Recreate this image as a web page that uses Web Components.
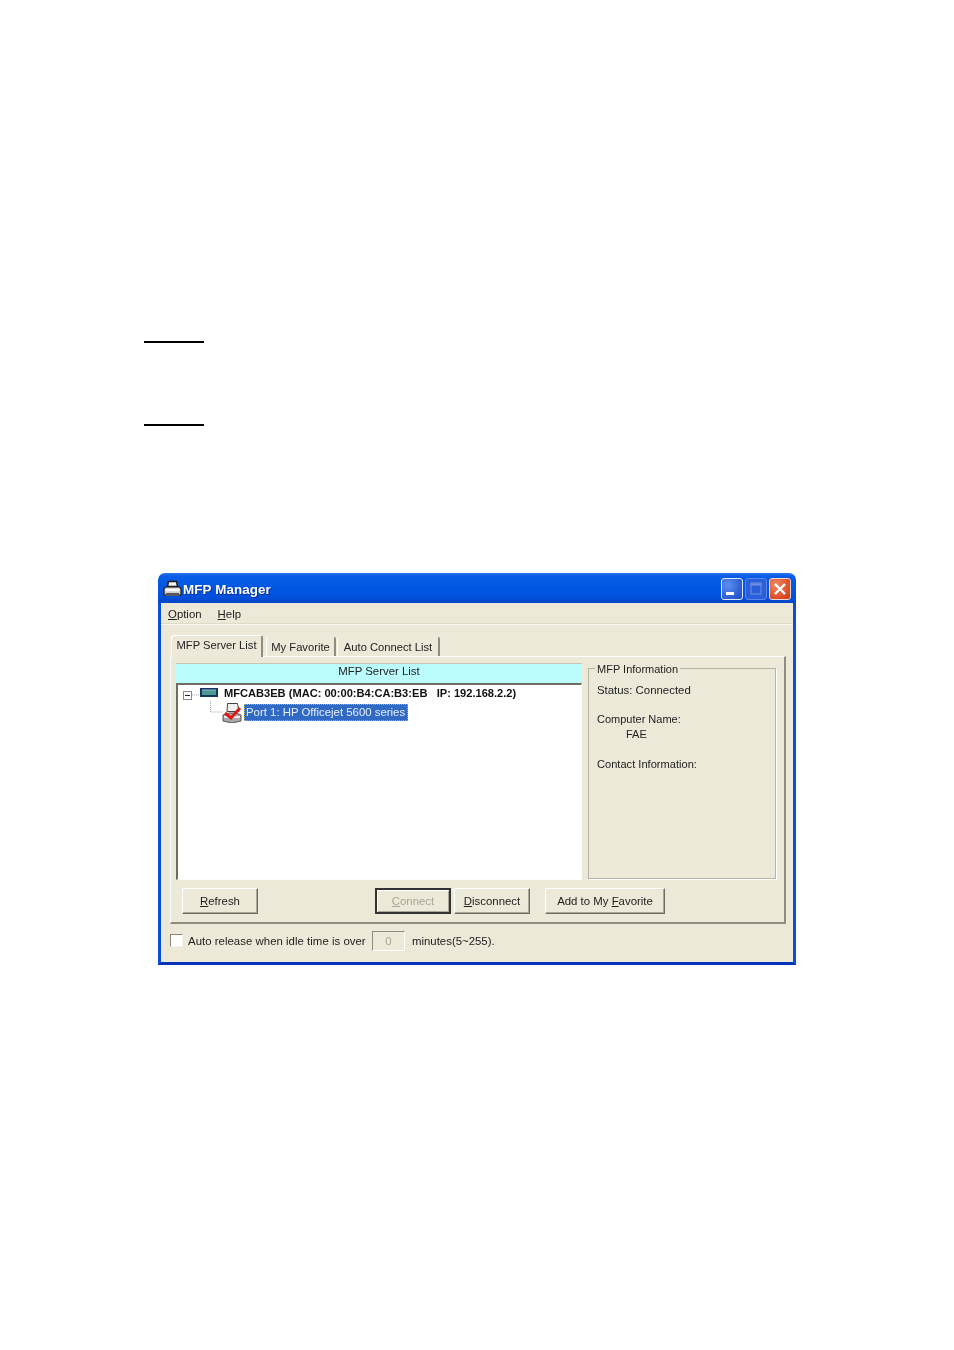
<!DOCTYPE html>
<html><head><meta charset="utf-8"><title>MFP Manager</title>
<style>html,body{margin:0;background:#fff}body{width:954px;height:1350px;overflow:hidden;font:11.4px "Liberation Sans",Arial,sans-serif;color:#222}</style>
</head><body>
<doc-page>
  <doc-rule style="margin-top:341px"></doc-rule>
  <doc-rule style="margin-top:81px"></doc-rule>
  <mfp-window style="margin-top:147px"></mfp-window>
</doc-page>
<script>
function el(name, html, css){
  customElements.define(name, class extends HTMLElement{
    constructor(){super();const r=this.attachShadow({mode:'open'});r.innerHTML='<style>'+css+'</style>'+html;}
  });
}
el('doc-page','<slot></slot>',':host{display:flow-root}');
el('doc-rule','',':host{display:block;width:60px;height:2px;margin-left:144px;background:#000}');
el('xp-caption',`
  <svg width="19" height="18" viewBox="0 0 19 18"><path d="M5.5 1.5h8l1 5h-10z" fill="#f2f2f2" stroke="#1c1c1c" stroke-width="1.4"/><path d="M2.5 7h14l1.5 2v5a1 1 0 0 1-1 1H2a1 1 0 0 1-1-1V9z" fill="#cfcfcf" stroke="#1c1c1c" stroke-width="1.2"/><path d="M2.5 8.8h14v2.4h-14z" fill="#fff"/><path d="M3 13h13v3H3z" fill="#5a5a5a"/></svg>
  <span class="t">MFP Manager</span>
  <span class="btns">
    <span class="b min"><svg width="22" height="22" viewBox="0 0 22 22"><rect x="5" y="14" width="8" height="3" fill="#fff"/></svg></span>
    <span class="b max"><svg width="22" height="22" viewBox="0 0 22 22"><rect x="6" y="5" width="10" height="11" fill="none" stroke="#6f92e0"/><path d="M6 6.5h10" stroke="#6f92e0" stroke-width="2"/></svg></span>
    <span class="b cls"><svg width="22" height="22" viewBox="0 0 22 22"><path d="M6 6l10 10M16 6L6 16" stroke="#fff" stroke-width="2.4"/></svg></span>
  </span>`,`
  :host{display:flex;align-items:center;height:30px;box-sizing:border-box;padding:2px 5px 0 5px;border-radius:7px 7px 0 0;background:linear-gradient(#2a78ee 0,#0a5de6 3px,#0358e2 12px,#0150dc 24px,#0245c8 30px)}
  svg{display:block;flex:none}
  .t{margin-left:1px;font:bold 13.4px "Liberation Sans",sans-serif;color:#fff;text-shadow:1px 1px 0 #0f2f92;letter-spacing:.1px;flex:1;padding-top:1px}
  .btns{display:flex;gap:2px}
  .b{width:22px;height:22px;box-sizing:border-box;border:1px solid #dfe8fb;border-radius:3px;display:flex;overflow:hidden}
  .b svg{margin:-1px}
  .min{background:radial-gradient(circle at 30% 30%,#5d8ff0,#2553cf 80%)}
  .max{background:#2a5fdc;border-color:#5c85e6}
  .cls{background:radial-gradient(circle at 30% 30%,#ee8a66,#d8431c 80%);border-color:#f0d8d0}`);
el('xp-menu','<span><u>O</u>ption</span><span><u>H</u>elp</span>',`
  :host{display:flex;gap:16px;height:21px;align-items:center;padding:0 0 0 7px;border-bottom:1px solid #f8f7f0;box-shadow:inset 0 -1px 0 #dedbc8}
  u{text-underline-offset:1px}`);
el('xp-tabs','<span class="a">MFP Server List</span><span class="i" style="width:70px">My Favorite</span><span class="i" style="width:103px">Auto Connect List</span>',`
  :host{display:flex;align-items:flex-end;height:21px;padding-left:10px;position:relative;z-index:1;white-space:nowrap;font-size:11.2px}
  span{display:flex;align-items:center;justify-content:center;box-sizing:border-box}
  .a{width:92px;height:22px;margin-bottom:-1px;background:#ece9d8;border:1px solid #fff;border-bottom:0;border-right:2px solid #8f8d80;border-radius:3px 3px 0 0;margin-right:3px;padding-bottom:3px}
  .i{height:19px;background:#ece9d8;border-left:1px solid #fff;border-right:2px solid #8f8d80;border-radius:2px 2px 0 0;margin-right:1px;padding-top:1px}`);
el('mfp-tree',`
  <div class="row r1">
    <svg width="35" height="16" viewBox="0 0 35 16"><rect x=".5" y="6.5" width="8" height="8" fill="#fff" stroke="#8a8a82"/><path d="M2 10.5h5" stroke="#222"/><path d="M9 10h8" stroke="#a8a8a0" stroke-dasharray="1 1"/><rect x="17" y="3" width="18" height="9" fill="#16365f"/><rect x="19" y="5" width="14" height="5" fill="#4f9a8f"/><path d="M19 5h14" stroke="#8fb8e8"/></svg>
    <b>MFCAB3EB (MAC: 00:00:B4:CA:B3:EB &nbsp;&nbsp;IP: 192.168.2.2)</b>
  </div>
  <div class="row r2">
    <svg width="60" height="22" viewBox="0 0 60 22"><path d="M27.5 0v11h12" fill="none" stroke="#a8a8a0" stroke-dasharray="1 1"/><path d="M44.5 2.5h10l1.5 8h-12z" fill="#f0f0f0" stroke="#444"/><path d="M40 14l6-2h7l5 2v6l-9 2-9-2z" fill="#a9a9a9" stroke="#555"/><path d="M41 15h16v2H41z" fill="#e6e6e6"/><path d="M42 12l6 5 9-10" fill="none" stroke="#e01818" stroke-width="3"/></svg>
    <span class="sel">Port 1: HP Officejet 5600 series</span>
  </div>`,`
  :host{display:block;box-sizing:border-box;height:197px;background:#fff;border:1px solid #fdfdf8;border-top:2px solid #6f6d62;border-left:2px solid #6f6d62;padding:0 0 0 5px}
  .row{display:flex;align-items:center}
  svg{display:block;flex:none}
  .r1{height:16px;gap:6px}
  b{font:bold 11.1px "Liberation Sans",Arial,sans-serif;white-space:pre;color:#111}
  .r2{height:22px}
  .sel{margin-left:1px;background:#316ac5;color:#e6eefc;width:164px;height:17px;box-sizing:border-box;padding-left:2px;line-height:16px;outline:1px dotted #c9b04a;outline-offset:-1px;white-space:nowrap}`);
el('mfp-info',`
  <span class="lg">MFP Information</span>
  <div style="margin-top:14px">Status: Connected</div>
  <div style="margin-top:15px;font-size:11px">Computer Name:</div>
  <div style="margin-top:1px;padding-left:29px;font-size:11px">FAE</div>
  <div style="margin-top:16px;font-size:11.1px">Contact Information:</div>`,`
  :host{display:block;position:relative;box-sizing:border-box;width:188px;height:211px;border:1px solid #b8b5a2;box-shadow:1px 1px 0 #fff;padding:0 0 0 8px;line-height:14px;white-space:nowrap}
  .lg{position:absolute;left:6px;top:-7px;background:#ece9d8;padding:0 2px;font-size:11px}`);
el('xp-button','<slot></slot>',`
  :host{display:flex;align-items:center;justify-content:center;box-sizing:border-box;height:26px;background:#ece9d8;border:1px solid;border-color:#fff #6f6d62 #6f6d62 #fff;box-shadow:inset -1px -1px 0 #aca899;white-space:nowrap;flex:none}
  :host([def]){border:2px solid #1a1a1a;border-color:#333;box-shadow:inset 1px 1px 0 #fff,inset -1px -1px 0 #aca899;color:#a8a696}`);
el('mfp-panel',`
  <div class="top">
    <div class="list"><div class="head">MFP Server List</div><mfp-tree></mfp-tree></div>
    <mfp-info></mfp-info>
  </div>
  <div class="bar">
    <xp-button style="width:76px"><u>R</u>efresh</xp-button>
    <xp-button def style="width:76px;margin-left:117px"><u>C</u>onnect</xp-button>
    <xp-button style="width:76px;margin-left:3px"><u>D</u>isconnect</xp-button>
    <xp-button style="width:120px;margin-left:15px">Add to My&nbsp;<u>F</u>avorite</xp-button>
  </div>`,`
  :host{display:block;box-sizing:border-box;width:616px;height:268px;margin-left:9px;border:1px solid #fff;border-right:2px solid #8f8d80;border-bottom:2px solid #8f8d80;padding:6px 0 0 5px}
  .top{display:flex;align-items:flex-start;gap:6px;height:217px}
  .list{width:406px}
  .head{height:20px;box-sizing:border-box;background:#bbfdfd;border-top:1px solid #c8c5b4;text-align:center;line-height:15px}
  mfp-info{margin-top:5px}
  .bar{display:flex;padding-left:6px;margin-top:8px}
  u{text-underline-offset:1px}`);
el('mfp-foot',`<span class="cb"></span><span class="l">Auto release when idle time is over</span><span class="n">0</span><span class="m">minutes(5~255).</span>`,`
  :host{display:flex;align-items:center;height:21px;padding-left:9px;margin-top:6px;white-space:nowrap}
  .cb{width:13px;height:13px;box-sizing:border-box;background:#fff;border:1px solid;border-color:#8a8878 #f4f3ea #f4f3ea #8a8878;flex:none}
  .l{margin-left:5px;width:184px;flex:none;letter-spacing:.03px}
  .n{width:33px;height:20px;box-sizing:border-box;border:1px solid;border-color:#8f8d80 #fff #fff #8f8d80;text-align:center;color:#a8a696;line-height:18px;flex:none}
  .m{margin-left:7px}`);
el('mfp-window',`
  <xp-caption></xp-caption>
  <div class="body">
    <xp-menu></xp-menu>
    <xp-tabs></xp-tabs>
    <mfp-panel></mfp-panel>
    <mfp-foot></mfp-foot>
  </div>`,`
  :host{display:block;width:638px;height:392px;margin-left:158px;box-sizing:border-box;border-radius:7px 7px 0 0;filter:blur(.4px)}
  .body{box-sizing:border-box;height:362px;background:#ece9d8;border:3px solid #0a4fdc;border-top:0;border-bottom-color:#0633b8}
  xp-tabs{margin-top:10px}`);
</script>
</body></html>
